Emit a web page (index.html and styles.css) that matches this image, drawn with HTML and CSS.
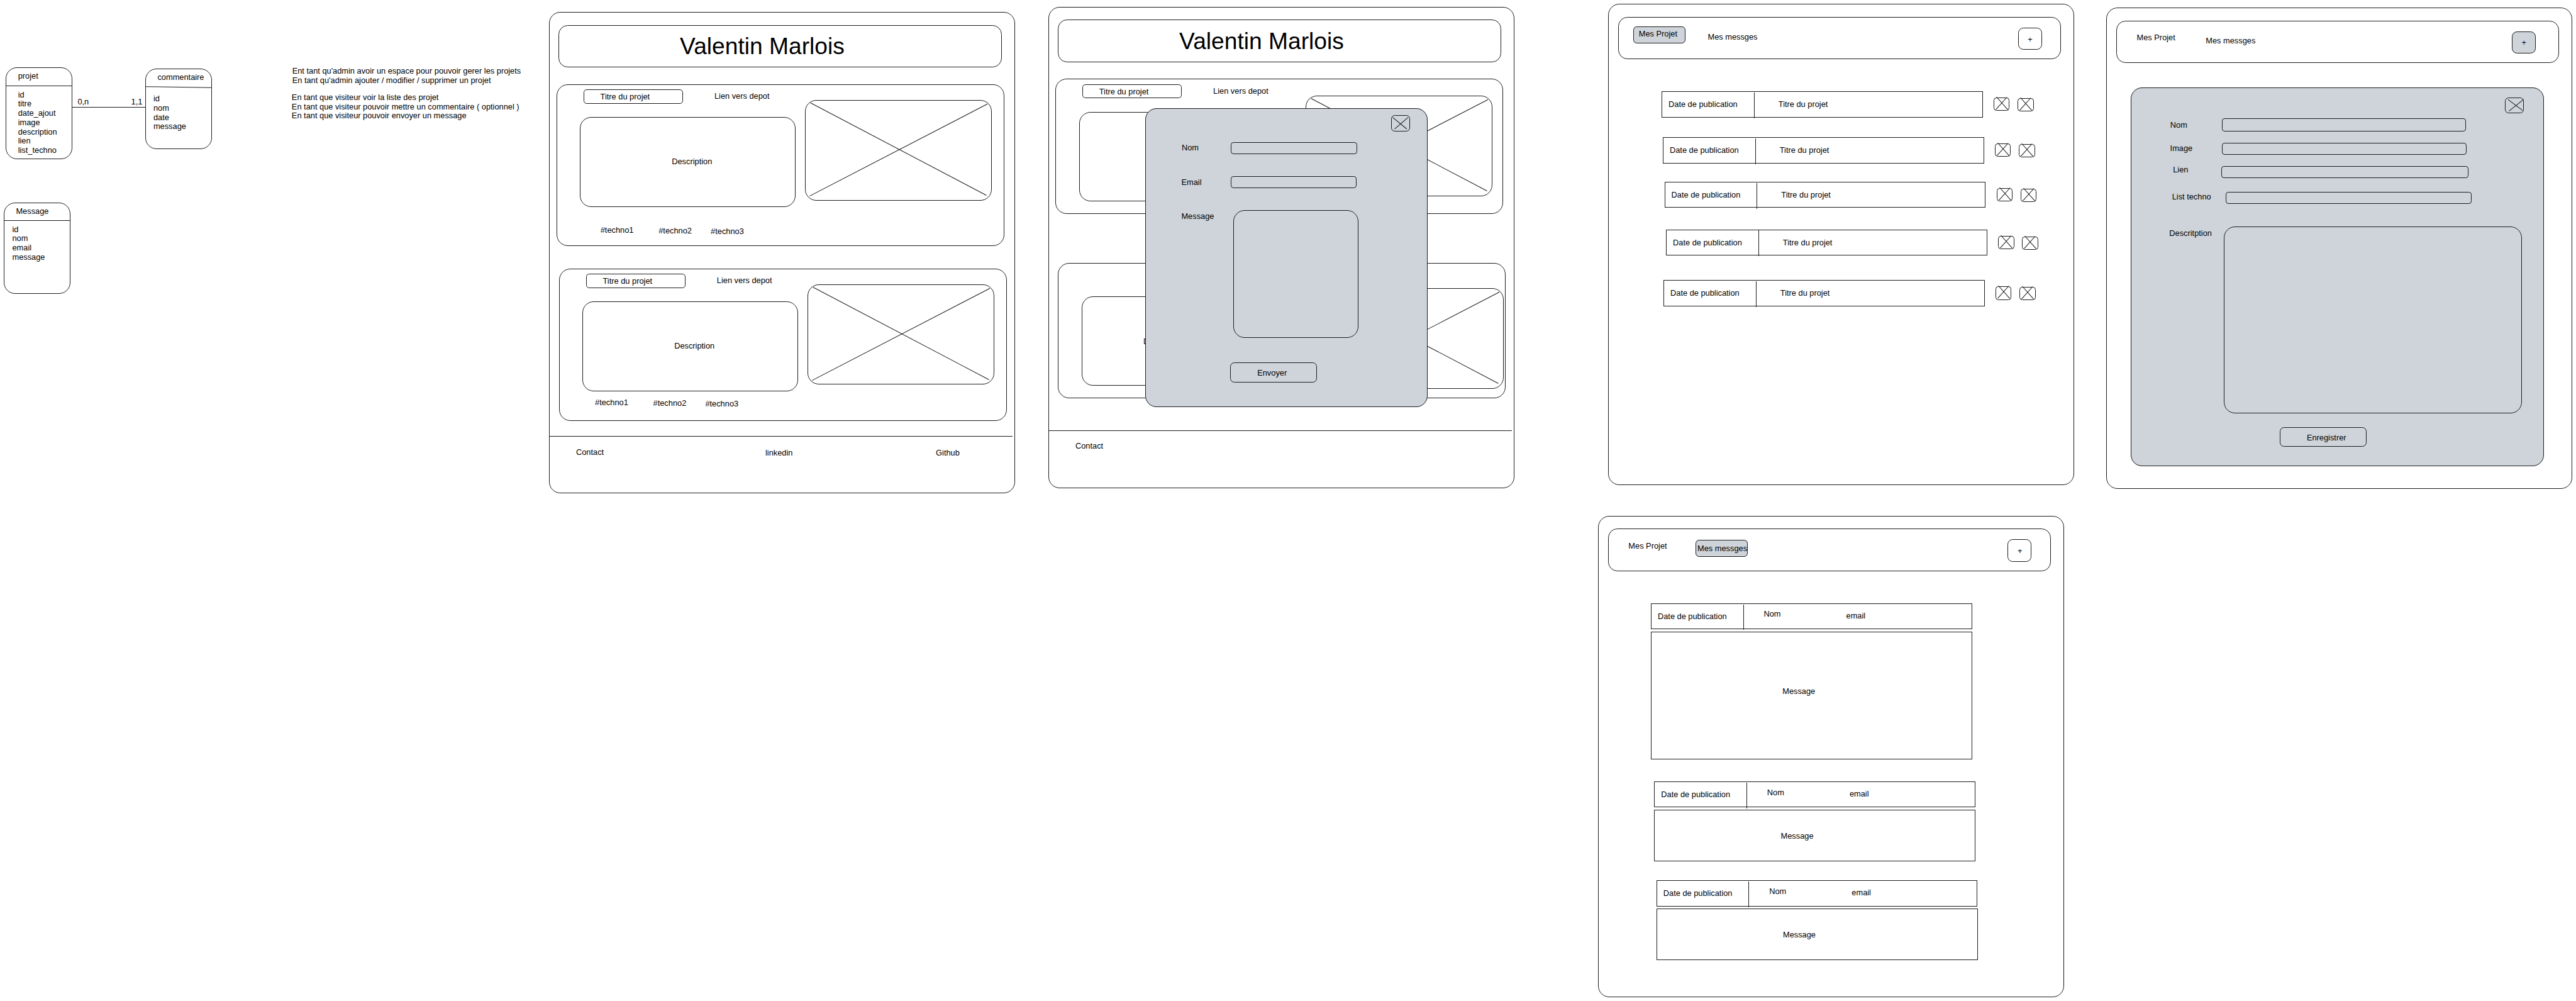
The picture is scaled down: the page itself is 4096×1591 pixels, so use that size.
FILE: index.html
```html
<!DOCTYPE html>
<html lang="fr">
<head>
<meta charset="utf-8">
<title>Portfolio - maquettes</title>
<link rel="stylesheet" href="styles.css">
</head>
<body>
<svg class="defs" width="0" height="0" aria-hidden="true">
  <symbol id="cross-large" viewBox="0 0 463 249" overflow="visible"><path d="M13.7 6.9 450 236.3M452.3 9.8 11.4 238"/></symbol>
  <symbol id="cross-small" viewBox="0 0 39.5 33" overflow="visible"><path d="M7 -1.6 35.3 30.2M33 -.8 5.5 29.8"/></symbol>
</svg>
<main class="board">

  <section class="entity entity-projet">
    <h2 class="entity-head">projet</h2>
    <ul class="entity-fields"><li>id</li><li>titre</li><li>date_ajout</li><li>image</li><li>description</li><li>lien</li><li>list_techno</li></ul>
  </section>
  <div class="link"><span>0,n</span><span>1,1</span></div>
  <section class="entity entity-commentaire">
    <h2 class="entity-head">commentaire</h2>
    <ul class="entity-fields"><li>id</li><li>nom</li><li>date</li><li>message</li></ul>
  </section>
  <section class="entity entity-message">
    <h2 class="entity-head">Message</h2>
    <ul class="entity-fields"><li>id</li><li>nom</li><li>email</li><li>message</li></ul>
  </section>

  <section class="stories">
    <p>Ent tant qu'admin avoir un espace pour pouvoir gerer les projets<br>En tant qu'admin ajouter / modifier / supprimer un projet</p>
    <p class="stories-visitor">En tant que visiteur voir la liste des projet<br>En tant que visiteur pouvoir mettre un commentaire ( optionnel )<br>En tant que visiteur pouvoir envoyer un message</p>
  </section>

  <!-- Accueil -->
  <section class="frame frame-home">
    <header class="bar bar-title"><h1>Valentin Marlois</h1></header>
    <article class="card card-first">
      <div class="info">
        <div class="info-top"><span class="name">Titre du projet</span><span class="repo">Lien vers depot</span></div>
        <div class="desc">Description</div>
        <div class="tags"><span>#techno1</span><span>#techno2</span><span>#techno3</span></div>
      </div>
      <svg class="picture"><use href="#cross-large"/></svg>
    </article>
    <article class="card card-second">
      <div class="info">
        <div class="info-top"><span class="name">Titre du projet</span><span class="repo">Lien vers depot</span></div>
        <div class="desc">Description</div>
        <div class="tags"><span>#techno1</span><span>#techno2</span><span>#techno3</span></div>
      </div>
      <svg class="picture"><use href="#cross-large"/></svg>
    </article>
    <footer class="foot"><span>Contact</span><span class="foot-linkedin">linkedin</span><span class="foot-github">Github</span></footer>
  </section>

  <!-- Accueil avec la fenetre de contact -->
  <section class="frame frame-contact">
    <header class="bar bar-title"><h1>Valentin Marlois</h1></header>
    <article class="card card-first">
      <div class="info">
        <div class="info-top"><span class="name">Titre du projet</span><span class="repo">Lien vers depot</span></div>
        <div class="desc"></div>
      </div>
      <svg class="picture"><use href="#cross-large"/></svg>
    </article>
    <article class="card card-second">
      <div class="info">
        <div class="info-top"></div>
        <div class="desc">D</div>
      </div>
      <svg class="picture"><use href="#cross-large"/></svg>
    </article>
    <footer class="foot"><span>Contact</span></footer>
    <form class="panel modal">
      <svg class="close" viewBox="0 0 46.6 40.5"><path d="M3.8 5.8 38.8 34.3M42 5.8 8.5 34.7"/></svg>
      <div class="field field-nom"><label>Nom</label><div class="input"></div></div>
      <div class="field field-email"><label>Email</label><div class="input"></div></div>
      <div class="field field-message"><label>Message</label><div class="area"></div></div>
      <div class="submit">Envoyer</div>
    </form>
  </section>

  <!-- Admin : projets -->
  <section class="frame frame-projects">
    <header class="bar"><span class="tab tab-projects active">Mes Projet</span><span class="tab tab-messages">Mes messges</span><span class="add">+</span></header>
    <div class="row row-1"><div class="strip"><span class="date">Date de publication</span><span class="row-title">Titre du projet</span></div><svg class="action"><use href="#cross-small"/></svg><svg class="action"><use href="#cross-small"/></svg></div>
    <div class="row row-2"><div class="strip"><span class="date">Date de publication</span><span class="row-title">Titre du projet</span></div><svg class="action"><use href="#cross-small"/></svg><svg class="action"><use href="#cross-small"/></svg></div>
    <div class="row row-3"><div class="strip"><span class="date">Date de publication</span><span class="row-title">Titre du projet</span></div><svg class="action"><use href="#cross-small"/></svg><svg class="action"><use href="#cross-small"/></svg></div>
    <div class="row row-4"><div class="strip"><span class="date">Date de publication</span><span class="row-title">Titre du projet</span></div><svg class="action"><use href="#cross-small"/></svg><svg class="action"><use href="#cross-small"/></svg></div>
    <div class="row row-5"><div class="strip"><span class="date">Date de publication</span><span class="row-title">Titre du projet</span></div><svg class="action"><use href="#cross-small"/></svg><svg class="action"><use href="#cross-small"/></svg></div>
  </section>

  <!-- Admin : ajout d'un projet -->
  <section class="frame frame-new">
    <header class="bar"><span class="tab tab-projects">Mes Projet</span><span class="tab tab-messages">Mes messges</span><span class="add active">+</span></header>
    <form class="panel editor">
      <svg class="close" viewBox="0 0 47 39.5"><path d="M7.6 4.9 44 32.2M46.2 4.9 9.9 33.8"/></svg>
      <div class="field edit-nom"><label>Nom</label><div class="input"></div></div>
      <div class="field edit-image"><label>Image</label><div class="input"></div></div>
      <div class="field edit-lien"><label>Lien</label><div class="input"></div></div>
      <div class="field edit-techno"><label>List techno</label><div class="input"></div></div>
      <div class="field edit-desc"><label>Descritption</label><div class="area"></div></div>
      <div class="submit">Enregistrer</div>
    </form>
  </section>

  <!-- Admin : messages -->
  <section class="frame frame-messages">
    <header class="bar"><span class="tab tab-projects">Mes Projet</span><span class="tab tab-messages active">Mes messges</span><span class="add">+</span></header>
    <article class="mail mail-1">
      <div class="strip"><span class="date">Date de publication</span><span class="from">Nom</span><span class="email">email</span></div>
      <div class="mail-body">Message</div>
    </article>
    <article class="mail mail-2">
      <div class="strip"><span class="date">Date de publication</span><span class="from">Nom</span><span class="email">email</span></div>
      <div class="mail-body">Message</div>
    </article>
    <article class="mail mail-3">
      <div class="strip"><span class="date">Date de publication</span><span class="from">Nom</span><span class="email">email</span></div>
      <div class="mail-body">Message</div>
    </article>
  </section>
</main>
</body>
</html>
```

FILE: styles.css
```css
:root {
  --ink: #000;
  --line: #1c1c1c;
  --stroke: 1.6px;
  --fill: #ced4da;
}

* { box-sizing: border-box; }

html, body { margin: 0; background: #fff; overflow: hidden; }

.defs { position: absolute; }

.board {
  position: relative;
  width: 6388px;
  height: 2481px;
  zoom: 0.6412;
  font: 20px/23px "Liberation Sans", Arial, Helvetica, sans-serif;
  color: var(--ink);
  white-space: nowrap;
}

h1, h2, p, ul { margin: 0; padding: 0; font: inherit; list-style: none; }

svg { display: block; flex: none; overflow: visible; fill: none; stroke: var(--line); stroke-width: 1.6; }

/* Outlined shapes: the stroke takes no room in the layout */
.entity, .frame, .bar, .card, .name, .desc, .picture, .panel, .close,
.input, .area, .submit, .active, .add, .strip, .action, .mail-body {
  outline: var(--stroke) solid var(--line);
  outline-offset: -1.6px;
}

.entity, .frame, .card, .desc, .picture, .panel, .area { border-radius: 28px; }

/* Data model */
.entity { position: absolute; width: 164.8px; }
.entity-head { position: relative; height: 46px; padding: 10.7px 0 0 30px; }
.entity-head::after { content: ""; position: absolute; left: 0; right: 0; bottom: -1px; border-top: var(--stroke) solid var(--line); }
.entity-fields { padding: 10.9px 0 0 30px; }
.entity-projet { left: 14.7px; top: 167.3px; height: 227.3px; }
.entity-commentaire { left: 360.4px; top: 169.7px; height: 199.2px; }
.entity-commentaire .entity-head { padding: 11.6px 0 0 30.2px; }
.entity-commentaire .entity-head::after { transform: rotate(0.9deg); }
.entity-commentaire .entity-fields { padding: 18.6px 0 0 20px; }
.entity-message { left: 10px; top: 501.8px; height: 227px; }
.entity-message .entity-head { height: 45.1px; padding: 11.2px 0 0 29.7px; }
.entity-message .entity-fields { padding: 10.8px 0 0 20.4px; }
.link {
  position: absolute;
  left: 179.5px;
  top: 241.8px;
  width: 180.9px;
  height: 24.5px;
  display: flex;
  justify-content: space-between;
  padding: 0 7.3px 0 13px;
  border-bottom: var(--stroke) solid var(--line);
}

.stories { position: absolute; left: 724.7px; top: 165.6px; }
.stories-visitor { margin: 19px 0 0 -1.3px; }

/* Screens */
.frame {
  position: absolute;
  width: 1155.6px;
  height: 1193px;
  padding-top: 32px;
}
.frame-home { left: 1361.4px; top: 29.8px; }
.frame-contact { left: 2599.7px; top: 16.7px; }
.frame-projects { left: 3988.6px; top: 9.8px; }
.frame-new { left: 5223.5px; top: 18.8px; }
.frame-messages { left: 3963px; top: 1278.4px; }

.bar {
  display: flex;
  align-items: flex-start;
  width: 1098.3px;
  height: 105.2px;
  margin-left: 24.2px;
  border-radius: 23px;
}
.bar-title h1 { margin: 20px 0 0 300.5px; font-size: 58px; line-height: 66px; }

.tab { border-radius: 9px; }
.tab-projects { width: 129.4px; height: 42.5px; margin: 24.1px 0 0 37.7px; padding: 7.7px 0 0 13.4px; }
.tab-messages { width: 130px; height: 42px; margin: 27.4px 0 0 50.2px; padding: 11.7px 0 0 4.9px; }
.add { width: 59.4px; height: 55.2px; margin: 26.8px 0 0 644.3px; padding: 18.2px 0 0 24.2px; border-radius: 13px; }
.frame-new .add { margin-left: 634px; }
.active { background: var(--fill); }

/* Project cards */
.card { display: flex; align-items: flex-start; width: 1110.5px; }
.info { flex: none; width: 616.1px; }
.info-top { display: flex; align-items: flex-start; height: 81.8px; padding: 13.2px 0 0 67.3px; }
.name { width: 247px; height: 35.2px; padding: 7.4px 0 0 41.7px; border-radius: 7.5px; }
.repo { margin: 5.9px 0 0 77.5px; }
.desc { width: 534.2px; height: 222.5px; margin-left: 58.9px; padding: 99px 0 0 227.3px; }
.tags { display: flex; align-items: flex-start; margin: 46.5px 0 0 109.2px; }
.tags span:nth-child(2) { margin: 2px 0 0 62px; }
.tags span:nth-child(3) { margin: 3.2px 0 0 47px; }
.picture { width: 463px; height: 249px; margin-top: 39px; }

.frame-home .card-first { height: 400.4px; margin: 42px 0 0 18.4px; }
.frame-home .card-second { height: 378px; margin: 56.3px 0 0 24.5px; }
.frame-home .card-second .tags { margin: 17px 0 0 89.6px; }
.frame-contact .card-first { height: 335.2px; margin: 41.6px 0 0 17.1px; }
.frame-contact .card-first .picture { margin: 42.1px 0 0 4.8px; }
.frame-contact .card-second { height: 335.6px; margin: 121.5px 0 0 24.1px; }
.frame-contact .card-second .desc { padding: 102px 0 0 152.5px; }
.frame-contact .card-second .picture { margin: 62.9px 0 0 26.6px; }

.foot {
  display: flex;
  align-items: flex-start;
  width: 1149.5px;
  margin-top: 36.6px;
  padding: 28.3px 0 0 67.1px;
  border-top: var(--stroke) solid var(--line);
}
.frame-contact .foot { margin-top: 78.8px; padding-top: 27.5px; }
.foot-linkedin { margin: 1.6px 0 0 400.7px; }
.foot-github { margin: 1.6px 0 0 355px; }

/* Grey panels with forms */
.panel { background: var(--fill); }
.close { border-radius: 9px; }
.field { display: flex; align-items: flex-start; }
.field label { flex: none; }
.input { border-radius: 6.5px; }
.submit { border-radius: 10.5px; }

.modal { position: absolute; left: 240.4px; top: 251.5px; width: 700.3px; height: 740.4px; padding-top: 17.5px; }
.modal .close { width: 46.6px; height: 40.5px; margin-left: 610.1px; }
.modal label { width: 122.2px; }
.modal .input { width: 312.8px; height: 29.8px; }
.modal .area { width: 311.2px; height: 317.1px; }
.field-nom { margin: 25.7px 0 0 90.2px; }
.field-nom label { padding-top: 3.6px; }
.field-email { margin: 54.7px 0 0 89.5px; }
.field-email label { padding-top: 4.4px; }
.field-message { margin: 55.1px 0 0 89.5px; }
.modal .field-message label { width: 128.4px; padding-top: 4.4px; }
.modal .submit { width: 215.5px; height: 49px; margin: 60.4px 0 0 210.9px; padding: 15.9px 0 0 66.9px; }

.editor { width: 1025.2px; height: 938.8px; margin: 60.3px 0 0 59.8px; padding-top: 25.4px; }
.editor .close { width: 47px; height: 39.5px; margin-left: 928.2px; }
.edit-nom { margin: 11.5px 0 0 98.5px; }
.edit-nom label { width: 128.9px; padding-top: 6.1px; }
.edit-nom .input { width: 603.8px; height: 32.6px; }
.edit-image { margin: 29px 0 0 98.2px; }
.edit-image label { width: 128.4px; padding-top: 3.3px; }
.edit-image .input { width: 606.1px; height: 30.2px; }
.edit-lien { margin: 27px 0 0 105.3px; }
.edit-lien label { width: 120.5px; margin-top: -1.3px; }
.edit-lien .input { width: 611.5px; height: 30.6px; }
.edit-techno { margin: 33.1px 0 0 103px; }
.edit-techno label { width: 132.7px; padding-top: 2.4px; }
.edit-techno .input { width: 610.7px; height: 31px; }
.edit-desc { margin: 54.7px 0 0 96.2px; }
.edit-desc label { width: 134.9px; padding-top: 7.3px; }
.edit-desc .area { width: 738.8px; height: 464px; }
.editor .submit { width: 215.1px; height: 49.8px; margin: 33.5px 0 0 370.6px; padding: 16.3px 0 0 66.5px; }

/* Lists */
.strip { display: flex; align-items: flex-start; flex: none; width: 796.3px; height: 64.4px; }
.date { width: 230.2px; height: 63.7px; margin-top: 2.5px; padding: 19px 0 0 17.2px; border-right: var(--stroke) solid var(--line); }
.row { display: flex; align-items: flex-start; height: 64.4px; }
.row-title { margin: 21.5px 0 0 59.6px; }
.action { width: 39.5px; height: 33px; margin: 15.6px 0 0 27.4px; border-radius: 7px; }
.action + .action { margin: 16.8px 0 0 20.2px; }
.row-1 { margin: 79.6px 0 0 131.8px; }
.row-2 { margin: 49.4px 0 0 134.9px; }
.row-3 { margin: 46.2px 0 0 138.9px; }
.row-4 { margin: 53.6px 0 0 142.8px; }
.row-5 { margin: 61.3px 0 0 136.5px; }

.from { margin: 16.4px 0 0 49.7px; }
.email { margin: 19.6px 0 0 162.3px; }
.mail-body { width: 797.4px; height: 127.7px; margin: 5.7px 0 0 -0.4px; padding: 54.2px 0 0 314.2px; }
.mail-1 { margin: 80px 0 0 130.8px; }
.mail-1 .mail-body { height: 316.4px; padding: 136.7px 0 0 326.8px; }
.mail-2 { margin: 55.3px 0 0 139.2px; }
.mail-3 { margin: 47.2px 0 0 144.6px; }
```
